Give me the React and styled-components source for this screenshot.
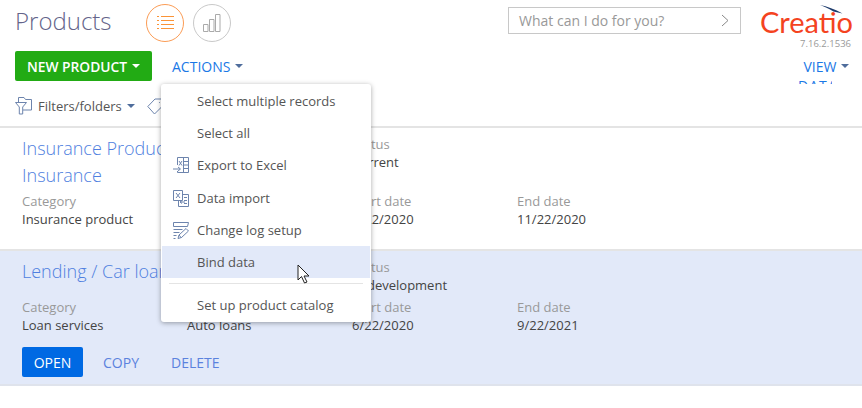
import React from "react";
import styled, { createGlobalStyle } from "styled-components";

const Global = createGlobalStyle`
  html, body { margin: 0; padding: 0; background: #fff; overflow: hidden; }
  body { font-family: "Open Sans", "Liberation Sans", sans-serif; width: 862px; height: 408px; position: relative; }
`;
const Page = styled.div`width: 862px; height: 408px; position: relative; overflow: hidden;`;
const Header = styled.header`height: 126px; border-bottom: 2px solid #e4e4e4; box-sizing: content-box;`;
const TopBar = styled.div`display: flex; align-items: flex-start; height: 51px; padding-left: 15px;`;
const Title = styled.h1`margin: 4px 0 0; width: 131px; font-size: 24px; line-height: 34px; font-weight: 300; color: #64648a;`;
const RoundBtn = styled.button`
  width: 38px; height: 38px; box-sizing: border-box; margin: 4px 9px 0 0; padding: 0; border-radius: 50%; background: #fff;
  border: 1px solid ${p => p.$active ? "#fb9c55" : "#c9c9c9"};
  display: flex; align-items: center; justify-content: center;
`;
const SearchBox = styled.div`
  margin: 7px 0 0 268px; width: 233px; height: 27px; box-sizing: border-box; border: 1px solid #c8c8c8;
  display: flex; align-items: center; justify-content: space-between; padding: 0 11px 0 10px;
  font-size: 14px; color: #999;
`;
const LogoBlock = styled.div`
  margin-left: 19px; width: 93px; display: flex; flex-direction: column; align-items: flex-end; position: relative;
`;
const LogoText = styled.div`
  font-family: "Lato", sans-serif; font-weight: 400; font-size: 29px; line-height: 30px; margin-top: 7px; color: #f4431f;
`;
const Swoosh = styled.svg`position: absolute; left: 60px; top: 5px;`;
const Version = styled.div`font-size: 9.5px; line-height: 13px; color: #999; margin: 0 2px 0 0;`;
const Toolbar = styled.div`display: flex; align-items: center; height: 30px; padding: 0 10px 0 15px; position: relative;`;
const PrimaryBtn = styled.button`
  height: 30px; width: 137px; border: 0; border-radius: 2px; background: #22ab14; color: #fff; padding: 0;
  font: 600 13.8px "Open Sans", sans-serif; display: flex; align-items: center; justify-content: center; gap: 5px;
`;
const LinkBtn = styled.button`
  border: 0; background: none; padding: 0; color: #1a78e6; font: 400 14px "Open Sans", sans-serif;
  display: flex; align-items: center; gap: 5px; margin-left: ${p => p.$left || 0}px;
`;
const Caret = styled.span`
  width: 0; height: 0; border-left: 4.500px solid transparent; border-right: 4.500px solid transparent;
  border-top: 4px solid ${p => p.$c || "#4f6d9c"}; display: inline-block;
`;
const Clipped = styled.div`
  position: absolute; left: 798px; top: 29px; height: 4px; overflow: hidden; width: 34px;
  font-size: 14px; line-height: 12px; color: #1a78e6; letter-spacing: 1px;
`;
const FilterBar = styled.div`display: flex; align-items: center; height: 24px; margin-top: 13px; padding-left: 15px; font-size: 13px; color: #555;`;
const FilterLabel = styled.span`margin: 0 5px 0 6px;`;
const TagIcon = styled.svg`margin-left: 12px;`;
const Row = styled.section`
  display: grid; grid-template-columns: 165px 165px 165px 1fr; padding-left: 22px;
  background: ${p => p.$on ? "#e2e9f9" : "#fff"};
  height: ${p => p.$h}px; box-sizing: border-box; padding-top: 7px;
  border-bottom: 2px solid ${p => p.$on ? "#dfe3ec" : "#e4e4e4"};
  align-content: start;
`;
const Head = styled.div`font-size: 18px; line-height: 27px; font-weight: 300; color: #4f7fe0; white-space: nowrap;`;
const HeadStack = styled.div`grid-column: 1 / span 2; grid-row: 1;`;
const Field = styled.div`display: flex; flex-direction: column; margin-top: ${p => p.$mt || 0}px; grid-column: ${p => p.$col};`;
const Label = styled.span`font-size: 13px; line-height: 18px; color: #999;`;
const Value = styled.span`font-size: 13px; line-height: 18px; color: #444;`;
const Actions = styled.div`grid-column: 1 / -1; display: flex; align-items: center; margin-top: 13px;`;
const OpenBtn = styled.button`
  width: 61px; height: 30px; border: 0; border-radius: 2px; background: #0069e3; color: #fff; padding: 0;
  font: 400 14px "Open Sans", sans-serif;
`;
const RowLink = styled.button`
  border: 0; background: none; padding: 0; margin-left: ${p => p.$l}px; color: #5b82de; font: 400 14px "Open Sans", sans-serif;
`;
const Menu = styled.ul`
  position: absolute; left: 161px; top: 84px; width: 210px; height: 238px; box-sizing: border-box; margin: 0; padding: 1px;
  list-style: none; background: #fff; border-radius: 3px; box-shadow: 0 1px 5px rgba(0,0,0,.35);
`;
const Item = styled.li`
  height: 32.2px; display: flex; align-items: center; position: relative; padding-left: 35px;
  font-size: 13px; color: #555; background: ${p => p.$hover ? "#e2e9f9" : "transparent"};
`;
const ItemIcon = styled.svg`position: absolute; left: 11px; top: 8px;`;
const Divider = styled.li`height: 1px; background: #e4e4e4; margin: 5px 7px 5px;`;
const Cursor = styled.svg`position: absolute; left: 297px; top: 264px;`;

const s = { fill: "none", stroke: "#6d84ad", strokeWidth: 1 };

export default function App() {
  return (
    <Page>
      <Global />
      <Header>
        <TopBar>
          <Title>Products</Title>
          <RoundBtn $active aria-label="list">
            <svg width="17" height="14" viewBox="0 0 17 14" stroke="#fb9437" strokeWidth="1" fill="none">
              <path d="M0 .5h2M4 .5h13M0 4.500h2M4 4.500h13M0 8.500h2M4 8.500h13M0 12.500h2M4 12.500h13" />
            </svg>
          </RoundBtn>
          <RoundBtn aria-label="chart">
            <svg width="18" height="18" viewBox="0 0 18 18" stroke="#aaa" strokeWidth="1" fill="none">
              <path d="M.5 10.500h4.500v7H.5zM6.500 5.500H11v12H6.500zM12.500.5H17v17h-4.500z" />
            </svg>
          </RoundBtn>
          <SearchBox>
            What can I do for you?
            <svg width="8" height="13" viewBox="0 0 8 13" stroke="#888" fill="none"><path d="M1 1l6 5.500L1 12" /></svg>
          </SearchBox>
          <LogoBlock>
            <Swoosh width="23" height="10" viewBox="0 0 23 10"><path d="M0 0c7 1.500 15 4 22.500 8.500l-9-2C9 3.500 4 1.500 0 0z" fill="#1c3a6b" /></Swoosh>
            <LogoText>Creatio</LogoText>
            <Version>7.16.2.1536</Version>
          </LogoBlock>
        </TopBar>
        <Toolbar>
          <PrimaryBtn>NEW PRODUCT <Caret $c="#fff" /></PrimaryBtn>
          <LinkBtn $left={20}>ACTIONS <Caret /></LinkBtn>
          <LinkBtn $left={560}>VIEW <Caret /></LinkBtn>
          <Clipped>DATA</Clipped>
        </Toolbar>
        <FilterBar>
          <svg width="17" height="18" viewBox="0 0 17 18" fill="none" stroke="#6d84ad">
            <path d="M.5 5.500h11l-3.800 4.500v7H4.300v-7zM3.500 5V.5h5.500l1.500 2h6v10.500H8" />
          </svg>
          <FilterLabel>Filters/folders</FilterLabel>
          <Caret />
          <TagIcon width="17" height="17" viewBox="0 0 17 17" fill="none" stroke="#6d84ad"><path d="M.8 8.500L8 1h7.500v7L7.500 16zM12 4.500h.8" /></TagIcon>
        </FilterBar>
      </Header>
      <Row $h={123}>
        <HeadStack>
          <Head>Insurance Products</Head>
          <Head>Insurance</Head>
        </HeadStack>
        <Field $col={3}><Label>Status</Label><Value>Current</Value></Field>
        <Field $col={1} $mt={3}><Label>Category</Label><Value>Insurance product</Value></Field>
        <Field $col={2} $mt={3}><Label>Type</Label><Value>Insurance</Value></Field>
        <Field $col={3} $mt={3}><Label>Start date</Label><Value>6/22/2020</Value></Field>
        <Field $col={4} $mt={3}><Label>End date</Label><Value>11/22/2020</Value></Field>
      </Row>
      <Row $on $h={135}>
        <HeadStack><Head>Lending / Car loans</Head></HeadStack>
        <Field $col={3}><Label>Status</Label><Value>In development</Value></Field>
        <Field $col={1} $mt={4}><Label>Category</Label><Value>Loan services</Value></Field>
        <Field $col={2} $mt={4}><Label>Type</Label><Value>Auto loans</Value></Field>
        <Field $col={3} $mt={4}><Label>Start date</Label><Value>6/22/2020</Value></Field>
        <Field $col={4} $mt={4}><Label>End date</Label><Value>9/22/2021</Value></Field>
        <Actions>
          <OpenBtn>OPEN</OpenBtn>
          <RowLink $l={20}>COPY</RowLink>
          <RowLink $l={32}>DELETE</RowLink>
        </Actions>
      </Row>
      <Menu>
        <Item>Select multiple records</Item>
        <Item>Select all</Item>
        <Item>
          <ItemIcon width="16" height="16" viewBox="0 0 16 16" {...s}><path d="M4.500 8V.5h11v15h-11V14M10.500.5v15M10.500 4.500h5M10.500 8h5M10.500 11.500h5M6 4l3 4.500M9 4L6 8.500M0 12h7M5 10l2.500 2L5 14" /></ItemIcon>
          Export to Excel
        </Item>
        <Item>
          <ItemIcon width="16" height="17" viewBox="0 0 16 17" {...s}><path d="M.5.5h9v10h-9zM3 3l4 5M7 3L3 8M9.500 4.500h6v12h-10V10.500M11 7.500h3M11 10.500h3M11 13.500h3M7 12h5M9 10.500L7 12l2 1.500" /></ItemIcon>
          Data import
        </Item>
        <Item>
          <ItemIcon width="16" height="17" viewBox="0 0 16 17" {...s}><path d="M.5.5h15l-1 4H.5zM.5 7.500h9M.5 10.500h6M.5 13.500h3M.5 16.500h2M5 16.500l1-3.500 7-6.500 2.500 2.500-7 6.500zM6 13l2.500 3" /></ItemIcon>
          Change log setup
        </Item>
        <Item $hover>Bind data</Item>
        <Divider />
        <Item>Set up product catalog</Item>
      </Menu>
      <Cursor width="13" height="21" viewBox="0 0 13 21"><path d="M1 1v15l3.500-3.500 3 6.500 2.500-1-3-6h5z" fill="#fff" stroke="#222" strokeWidth="1" /></Cursor>
    </Page>
  );
}
